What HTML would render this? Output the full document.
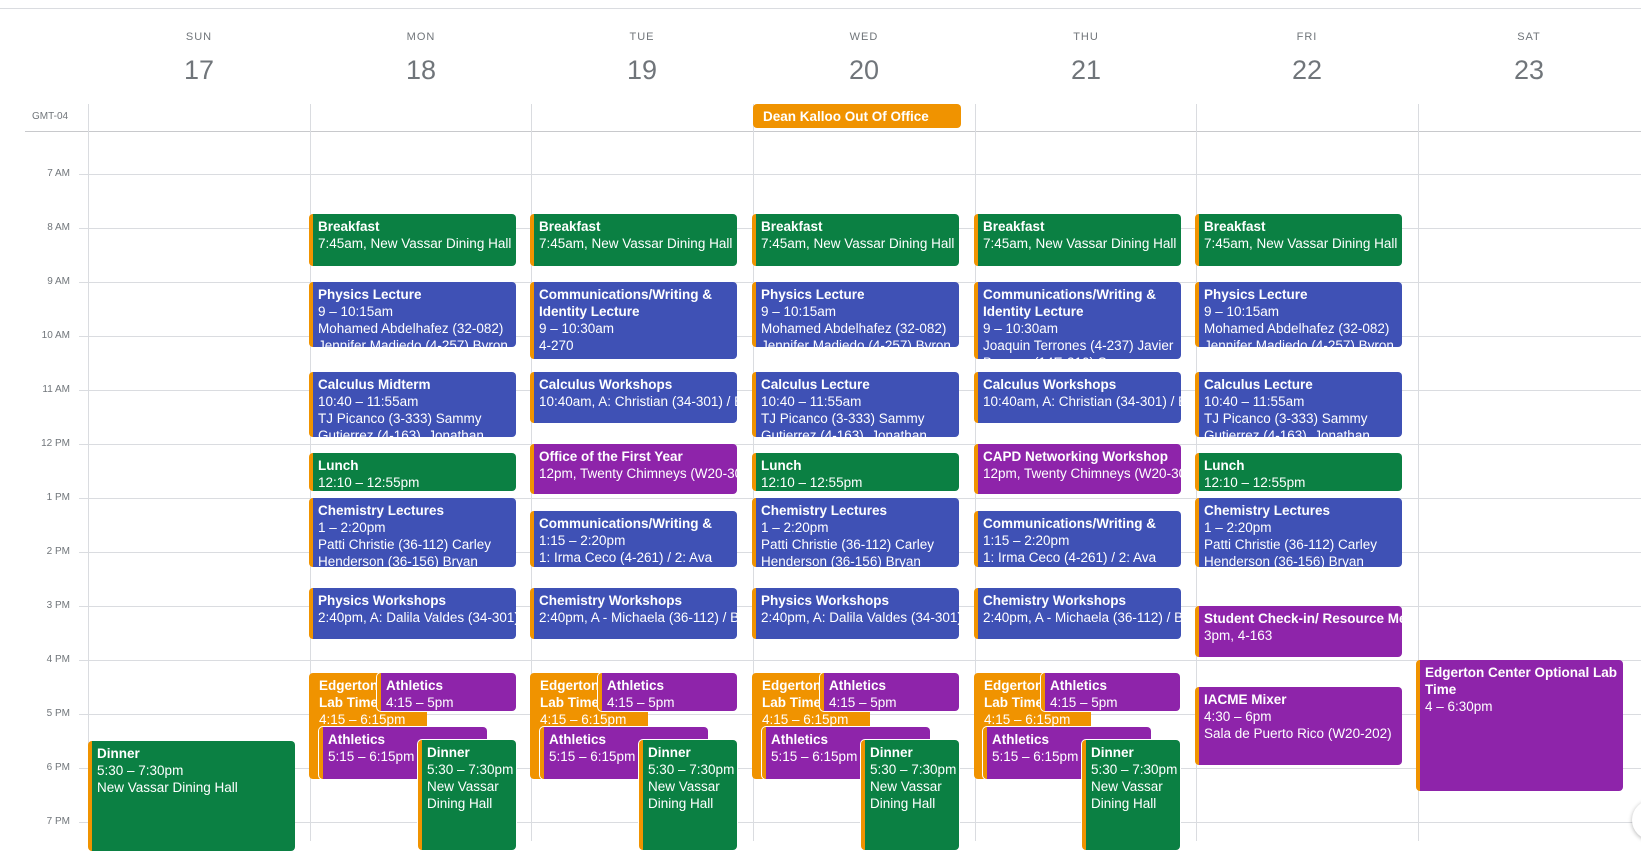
<!DOCTYPE html>
<html><head><meta charset="utf-8"><style>
*{margin:0;padding:0;box-sizing:border-box}
body{width:1641px;height:841px;overflow:hidden;background:#fff;font-family:"Liberation Sans",Arial,sans-serif;position:relative}
.a{position:absolute}
.hl{position:absolute;left:79px;right:0;height:1px;background:#dadce0}
.vl{position:absolute;top:104px;bottom:0;width:1px;background:#dadce0}
.hr{position:absolute;left:0;width:70px;text-align:right;font-size:10px;color:#70757a}
.dn{position:absolute;top:31px;width:222px;text-align:center;font-size:11px;letter-spacing:1px;color:#70757a}
.dd{position:absolute;top:55px;width:222px;text-align:center;font-size:27px;color:#70757a}
.e{position:absolute;border-radius:4px;color:#fff;font-size:13.5px;line-height:17px;padding:4px 4px 0 5px;overflow:hidden;white-space:nowrap;border-left:4px solid #f09300}
.e b{font-weight:bold}
.g{background:#0b8043}.bl{background:#3f51b5}.p{background:#8e24aa}.o{background:#f09300}
.w{box-shadow:0 0 0 1px #fff}
</style></head><body>
<div class="a" style="left:0;right:0;top:8px;height:1px;background:#dadce0"></div>
<div class="dn" style="left:88px">SUN</div><div class="dd" style="left:88px">17</div>
<div class="dn" style="left:310px">MON</div><div class="dd" style="left:310px">18</div>
<div class="dn" style="left:531px">TUE</div><div class="dd" style="left:531px">19</div>
<div class="dn" style="left:753px">WED</div><div class="dd" style="left:753px">20</div>
<div class="dn" style="left:975px">THU</div><div class="dd" style="left:975px">21</div>
<div class="dn" style="left:1196px">FRI</div><div class="dd" style="left:1196px">22</div>
<div class="dn" style="left:1418px">SAT</div><div class="dd" style="left:1418px">23</div>
<div class="a" style="left:32px;top:111px;font-size:10px;color:#70757a">GMT-04</div>
<div class="a" style="left:25px;right:0;top:131px;height:1px;background:#c8c9cc"></div>
<div class="hl" style="top:174px"></div><div class="hl" style="top:228px"></div><div class="hl" style="top:282px"></div><div class="hl" style="top:336px"></div><div class="hl" style="top:390px"></div><div class="hl" style="top:444px"></div><div class="hl" style="top:498px"></div><div class="hl" style="top:552px"></div><div class="hl" style="top:606px"></div><div class="hl" style="top:660px"></div><div class="hl" style="top:714px"></div><div class="hl" style="top:768px"></div><div class="hl" style="top:822px"></div>
<div class="hr" style="top:168px">7 AM</div><div class="hr" style="top:222px">8 AM</div><div class="hr" style="top:276px">9 AM</div><div class="hr" style="top:330px">10 AM</div><div class="hr" style="top:384px">11 AM</div><div class="hr" style="top:438px">12 PM</div><div class="hr" style="top:492px">1 PM</div><div class="hr" style="top:546px">2 PM</div><div class="hr" style="top:600px">3 PM</div><div class="hr" style="top:654px">4 PM</div><div class="hr" style="top:708px">5 PM</div><div class="hr" style="top:762px">6 PM</div><div class="hr" style="top:816px">7 PM</div>
<div class="vl" style="left:88px"></div><div class="vl" style="left:310px"></div><div class="vl" style="left:531px"></div><div class="vl" style="left:753px"></div><div class="vl" style="left:975px"></div><div class="vl" style="left:1196px"></div><div class="vl" style="left:1418px"></div>

<div class="e o" style="left:753px;top:104px;width:208px;height:24px;border-left:0;padding-left:10px;padding-top:4px"><b>Dean Kalloo Out Of Office</b></div>

<div class="e g" style="left:309px;top:214px;width:207px;height:52px"><b>Breakfast</b><br>7:45am, New Vassar Dining Hall</div>
<div class="e g" style="left:530px;top:214px;width:207px;height:52px"><b>Breakfast</b><br>7:45am, New Vassar Dining Hall</div>
<div class="e g" style="left:752px;top:214px;width:207px;height:52px"><b>Breakfast</b><br>7:45am, New Vassar Dining Hall</div>
<div class="e g" style="left:974px;top:214px;width:207px;height:52px"><b>Breakfast</b><br>7:45am, New Vassar Dining Hall</div>
<div class="e g" style="left:1195px;top:214px;width:207px;height:52px"><b>Breakfast</b><br>7:45am, New Vassar Dining Hall</div>

<div class="e bl" style="left:309px;top:282px;width:207px;height:65px"><b>Physics Lecture</b><br>9 – 10:15am<br>Mohamed Abdelhafez (32-082)<br>Jennifer Madiedo (4-257) Byron</div>
<div class="e bl" style="left:530px;top:282px;width:207px;height:77px"><b>Communications/Writing &amp;<br>Identity Lecture</b><br>9 – 10:30am<br>4-270</div>
<div class="e bl" style="left:752px;top:282px;width:207px;height:65px"><b>Physics Lecture</b><br>9 – 10:15am<br>Mohamed Abdelhafez (32-082)<br>Jennifer Madiedo (4-257) Byron</div>
<div class="e bl" style="left:974px;top:282px;width:207px;height:77px"><b>Communications/Writing &amp;<br>Identity Lecture</b><br>9 – 10:30am<br>Joaquin Terrones (4-237) Javier<br>Barroso (14E-310) Susan</div>
<div class="e bl" style="left:1195px;top:282px;width:207px;height:65px"><b>Physics Lecture</b><br>9 – 10:15am<br>Mohamed Abdelhafez (32-082)<br>Jennifer Madiedo (4-257) Byron</div>

<div class="e bl" style="left:309px;top:372px;width:207px;height:65px"><b>Calculus Midterm</b><br>10:40 – 11:55am<br>TJ Picanco (3-333) Sammy<br>Gutierrez (4-163), Jonathan</div>
<div class="e bl" style="left:530px;top:372px;width:207px;height:51px"><b>Calculus Workshops</b><br>10:40am, A: Christian (34-301) / B</div>
<div class="e bl" style="left:752px;top:372px;width:207px;height:65px"><b>Calculus Lecture</b><br>10:40 – 11:55am<br>TJ Picanco (3-333) Sammy<br>Gutierrez (4-163), Jonathan</div>
<div class="e bl" style="left:974px;top:372px;width:207px;height:51px"><b>Calculus Workshops</b><br>10:40am, A: Christian (34-301) / B</div>
<div class="e bl" style="left:1195px;top:372px;width:207px;height:65px"><b>Calculus Lecture</b><br>10:40 – 11:55am<br>TJ Picanco (3-333) Sammy<br>Gutierrez (4-163), Jonathan</div>

<div class="e g" style="left:309px;top:453px;width:207px;height:38px"><b>Lunch</b><br>12:10 – 12:55pm</div>
<div class="e p" style="left:530px;top:444px;width:207px;height:50px"><b>Office of the First Year</b><br>12pm, Twenty Chimneys (W20-307)</div>
<div class="e g" style="left:752px;top:453px;width:207px;height:38px"><b>Lunch</b><br>12:10 – 12:55pm</div>
<div class="e p" style="left:974px;top:444px;width:207px;height:50px"><b>CAPD Networking Workshop</b><br>12pm, Twenty Chimneys (W20-307)</div>
<div class="e g" style="left:1195px;top:453px;width:207px;height:38px"><b>Lunch</b><br>12:10 – 12:55pm</div>

<div class="e bl" style="left:309px;top:498px;width:207px;height:69px"><b>Chemistry Lectures</b><br>1 – 2:20pm<br>Patti Christie (36-112) Carley<br>Henderson (36-156) Bryan</div>
<div class="e bl" style="left:530px;top:511px;width:207px;height:56px"><b>Communications/Writing &amp;</b><br>1:15 – 2:20pm<br>1: Irma Ceco (4-261) / 2: Ava</div>
<div class="e bl" style="left:752px;top:498px;width:207px;height:69px"><b>Chemistry Lectures</b><br>1 – 2:20pm<br>Patti Christie (36-112) Carley<br>Henderson (36-156) Bryan</div>
<div class="e bl" style="left:974px;top:511px;width:207px;height:56px"><b>Communications/Writing &amp;</b><br>1:15 – 2:20pm<br>1: Irma Ceco (4-261) / 2: Ava</div>
<div class="e bl" style="left:1195px;top:498px;width:207px;height:69px"><b>Chemistry Lectures</b><br>1 – 2:20pm<br>Patti Christie (36-112) Carley<br>Henderson (36-156) Bryan</div>

<div class="e bl" style="left:309px;top:588px;width:207px;height:51px"><b>Physics Workshops</b><br>2:40pm, A: Dalila Valdes (34-301) / B</div>
<div class="e bl" style="left:530px;top:588px;width:207px;height:51px"><b>Chemistry Workshops</b><br>2:40pm, A - Michaela (36-112) / B</div>
<div class="e bl" style="left:752px;top:588px;width:207px;height:51px"><b>Physics Workshops</b><br>2:40pm, A: Dalila Valdes (34-301) / B</div>
<div class="e bl" style="left:974px;top:588px;width:207px;height:51px"><b>Chemistry Workshops</b><br>2:40pm, A - Michaela (36-112) / B</div>
<div class="e p" style="left:1195px;top:606px;width:207px;height:51px"><b>Student Check-in/ Resource Meeting</b><br>3pm, 4-163</div>
<div class="e p" style="left:1195px;top:687px;width:207px;height:78px"><b>IACME Mixer</b><br>4:30 – 6pm<br>Sala de Puerto Rico (W20-202)</div>
<div class="e p" style="left:1416px;top:660px;width:207px;height:131px;white-space:normal"><b>Edgerton Center Optional Lab Time</b><br>4 – 6:30pm</div>

<div class="e g" style="left:88px;top:741px;width:207px;height:110px"><b>Dinner</b><br>5:30 – 7:30pm<br>New Vassar Dining Hall</div>

<div class="e o" style="left:309px;top:673px;width:118px;height:106px;border-left:0;padding-left:10px"><b>Edgerton<br>Lab Time</b><br>4:15 – 6:15pm</div>
<div class="e p w" style="left:377px;top:673px;width:139px;height:38px"><b>Athletics</b><br>4:15 – 5pm</div>
<div class="e p w" style="left:319px;top:727px;width:168px;height:52px"><b>Athletics</b><br>5:15 – 6:15pm</div>
<div class="e g w" style="left:418px;top:740px;width:98px;height:110px"><b>Dinner</b><br>5:30 – 7:30pm<br>New Vassar<br>Dining Hall</div>

<div class="e o" style="left:530px;top:673px;width:118px;height:106px;border-left:0;padding-left:10px"><b>Edgerton<br>Lab Time</b><br>4:15 – 6:15pm</div>
<div class="e p w" style="left:598px;top:673px;width:139px;height:38px"><b>Athletics</b><br>4:15 – 5pm</div>
<div class="e p w" style="left:540px;top:727px;width:168px;height:52px"><b>Athletics</b><br>5:15 – 6:15pm</div>
<div class="e g w" style="left:639px;top:740px;width:98px;height:110px"><b>Dinner</b><br>5:30 – 7:30pm<br>New Vassar<br>Dining Hall</div>

<div class="e o" style="left:752px;top:673px;width:118px;height:106px;border-left:0;padding-left:10px"><b>Edgerton<br>Lab Time</b><br>4:15 – 6:15pm</div>
<div class="e p w" style="left:820px;top:673px;width:139px;height:38px"><b>Athletics</b><br>4:15 – 5pm</div>
<div class="e p w" style="left:762px;top:727px;width:168px;height:52px"><b>Athletics</b><br>5:15 – 6:15pm</div>
<div class="e g w" style="left:861px;top:740px;width:98px;height:110px"><b>Dinner</b><br>5:30 – 7:30pm<br>New Vassar<br>Dining Hall</div>

<div class="e o" style="left:974px;top:673px;width:117px;height:106px;border-left:0;padding-left:10px"><b>Edgerton<br>Lab Time</b><br>4:15 – 6:15pm</div>
<div class="e p w" style="left:1041px;top:673px;width:139px;height:38px"><b>Athletics</b><br>4:15 – 5pm</div>
<div class="e p w" style="left:983px;top:727px;width:168px;height:52px"><b>Athletics</b><br>5:15 – 6:15pm</div>
<div class="e g w" style="left:1082px;top:740px;width:98px;height:110px"><b>Dinner</b><br>5:30 – 7:30pm<br>New Vassar<br>Dining Hall</div>

<div class="a" style="left:1632px;top:800px;width:40px;height:40px;border-radius:50%;background:#fff;box-shadow:0 1px 4px rgba(0,0,0,.3)"></div>
</body></html>
